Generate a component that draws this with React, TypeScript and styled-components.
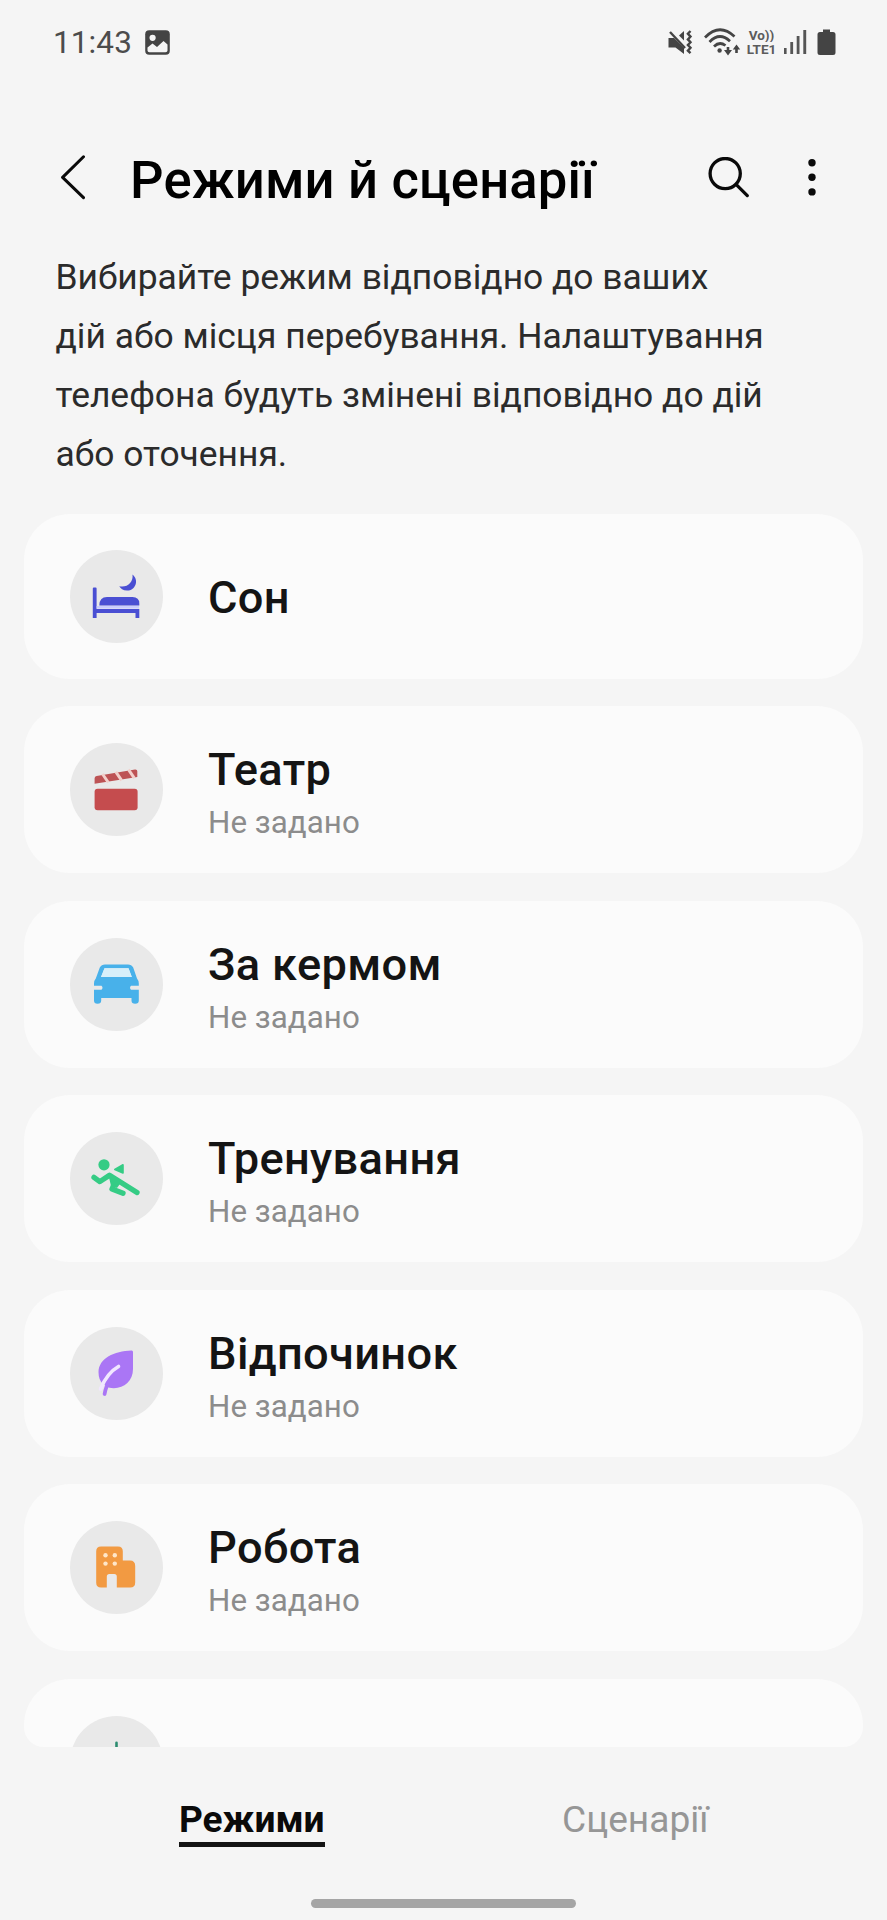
import React from 'react';
import styled, { createGlobalStyle } from 'styled-components';

const GlobalStyle = createGlobalStyle`
  * { box-sizing: border-box; }
  html, body { margin: 0; padding: 0; background: #f5f5f5; }
  body { font-family: Roboto, "Noto Sans", sans-serif; overflow: hidden; }
  h1, h2, p { margin: 0; }
  svg { display: block; flex: none; }
  button { border: 0; padding: 0; background: none; font: inherit; color: inherit; }
`;

const Screen = styled.div`
  width: 887px;
  height: 1920px;
  display: flex;
  flex-direction: column;
  background: #f5f5f5;
  overflow: hidden;
`;

const StatusBar = styled.div`
  flex: none;
  height: 84px;
  padding: 0 51px 0 53px;
  display: flex;
  align-items: center;
  justify-content: space-between;
  color: #4c4c4c;
`;

const StatusGroup = styled.div`
  display: flex;
  align-items: center;
`;

const Clock = styled.span`
  font-size: 31.5px;
  line-height: 40px;
  padding-top: 1px;
  letter-spacing: 0.1px;
  margin-right: 12px;
`;

const VoLte = styled.div`
  width: 33px;
  margin: 0 6px 0 4px;
  font-size: 13.5px;
  font-weight: 700;
  line-height: 14px;
  text-align: center;
  white-space: nowrap;
  color: #5c5c5c;
`;

const VoLteLine = styled.div`
  height: 14px;
  overflow: hidden;
`;

const Header = styled.header`
  flex: none;
  height: 117px;
  margin-top: 37px;
  padding: 0 66px 0 59px;
  display: flex;
  align-items: center;
`;

const IconButton = styled.button<{ $gap?: number }>`
  display: flex;
  margin-left: ${({ $gap = 0 }) => $gap}px;
`;

const Title = styled.h1`
  flex: 1;
  margin-left: 41px;
  font-size: 52.6px;
  font-weight: 500;
  line-height: 62px;
  letter-spacing: 0.15px;
  color: #000;
  white-space: nowrap;
`;

const Description = styled.p`
  flex: none;
  padding: 10px 55.5px 0;
  height: 246px;
  font-size: 35.4px;
  line-height: 59px;
  color: #2b2b2b;
`;

const Line = styled.span`
  display: block;
  white-space: nowrap;
`;

const CardList = styled.main`
  flex: none;
  height: 1263px;
  margin: 0 24px;
  padding-top: 29.5px;
  display: flex;
  flex-direction: column;
  gap: 27.6px;
  overflow: hidden;
  border-radius: 0 0 20px 20px;
`;

const Card = styled.section<{ $single?: boolean }>`
  flex: none;
  height: ${({ $single }) => ($single ? 165 : 167)}px;
  padding: 0 45.5px;
  display: flex;
  align-items: center;
  gap: 45.5px;
  border-radius: 46px;
  background: #fbfbfb;
`;

const IconCircle = styled.div`
  flex: none;
  width: 93px;
  height: 93px;
  border-radius: 50%;
  background: #e9e9e9;
`;

const CardText = styled.div<{ $single?: boolean }>`
  padding-top: ${({ $single }) => ($single ? 4 : 13)}px;
`;

const CardTitle = styled.h2`
  font-size: 45.2px;
  font-weight: 500;
  line-height: 54px;
  letter-spacing: 0.35px;
  color: #141414;
  white-space: nowrap;
`;

const CardStatus = styled.p`
  font-size: 31.3px;
  line-height: 52px;
  letter-spacing: 0.05px;
  color: #8c8c8c;
`;

const TabBar = styled.nav`
  flex: 1;
  display: grid;
  grid-template-columns: 1fr 1fr;
  padding: 50px 60px 0;
`;

const Tab = styled.button<{ $active?: boolean }>`
  justify-self: center;
  align-self: start;
  height: 50px;
  font-size: 37.1px;
  line-height: 44px;
  font-weight: ${({ $active }) => ($active ? 700 : 400)};
  color: ${({ $active }) => ($active ? '#0a0a0a' : '#969696')};
  border-bottom: ${({ $active }) => ($active ? '5px solid #141414' : '5px solid transparent')};
`;

const HomeArea = styled.footer`
  flex: none;
  height: 21px;
  display: flex;
  justify-content: center;
`;

const HomeHandle = styled.div`
  width: 265px;
  height: 9px;
  border-radius: 5px;
  background: #a5a5a5;
`;

const PictureIcon = () => (
  <svg width="27" height="27" viewBox="0 0 27 27">
    <rect x="1.2" y="1.2" width="24.6" height="24.6" rx="4" fill="#444" />
    <circle cx="8.6" cy="8.8" r="3.1" fill="#f5f5f5" />
    <path d="M3.5 18.5 L8.5 14.5 L13 18 L19.5 12 L23.5 15.5 V21.5 Q23.5 23.2 21.5 23.2 H5.5 Q3.5 23.2 3.5 21.5 Z" fill="#f5f5f5" />
  </svg>
);

const MuteIcon = () => (
  <svg width="25" height="27" viewBox="0 0 25 27" fill="#444">
    <path d="M0.5 9 H6 L16 19 V25 L7.5 18.5 H0.5 Z" />
    <path d="M11 6.5 L16 2 V11.5 Z" />
    <path d="M2 3 L17 19" stroke="#444" strokeWidth="2.4" />
    <path d="M22.5 2 l-2.6 2.8 2.6 2.8 -2.6 2.8 2.6 2.8 -2.6 2.8 2.6 2.8 -2.6 2.8 2.6 2.6" fill="none" stroke="#444" strokeWidth="2.4" />
  </svg>
);

const WifiSvg = styled.svg`
  margin-left: 11px;
`;

const WifiIcon = () => (
  <WifiSvg width="37" height="29" viewBox="0 0 37 29" fill="none" stroke="#444" strokeWidth="2.7">
    <path d="M1 9.5 Q15.5 -5.5 30.5 8.5" />
    <path d="M5.5 14 Q15.5 3.5 26 13.2" />
    <path d="M10 18.5 Q15.5 13 21.5 17.5" />
    <circle cx="15.6" cy="22.5" r="2.2" fill="#444" stroke="none" />
    <path d="M24 19 V24 M32.5 25 V20" strokeWidth="2.6" />
    <path d="M20 22 H28 L24 27.4 Z M28.8 21.5 H36.2 L32.5 16.4 Z" fill="#444" stroke="none" />
  </WifiSvg>
);

const SignalIcon = () => (
  <svg width="23" height="26" viewBox="0 0 23 26" fill="#555">
    <rect x="0" y="19" width="2.6" height="6" />
    <rect x="6.3" y="13" width="2.8" height="12" />
    <rect x="12.7" y="7" width="2.8" height="18" />
    <rect x="19.3" y="1" width="2.9" height="24" />
  </svg>
);

const BatterySvg = styled.svg`
  margin-left: 10px;
`;

const BatteryIcon = () => (
  <BatterySvg width="19" height="27" viewBox="0 0 19 27" fill="#444">
    <path d="M6 0.5 H13 V3 H16 Q18.5 3 18.5 5.5 V23.5 Q18.5 26 16 26 H3 Q.5 26 .5 23.5 V5.5 Q.5 3 3 3 H6 Z" />
  </BatterySvg>
);

const BackIcon = () => (
  <svg width="30" height="50" viewBox="0 0 30 50" fill="none" stroke="#0a0a0a" strokeWidth="3" strokeLinecap="round" strokeLinejoin="round">
    <path d="M24.5 1.8 L3.6 22.4 L24.5 42.6" />
  </svg>
);

const SearchIcon = () => (
  <svg width="46" height="46" viewBox="0 0 46 46" fill="none" stroke="#0a0a0a" strokeWidth="3.3" strokeLinecap="round">
    <circle cx="19.2" cy="16.6" r="15.1" />
    <path d="M30.3 27.6 L41.3 38.6" />
  </svg>
);

const MoreIcon = () => (
  <svg width="18" height="46" viewBox="0 0 18 46" fill="#0a0a0a">
    <circle cx="9" cy="5.7" r="3.7" />
    <circle cx="9" cy="20.3" r="3.7" />
    <circle cx="9" cy="34.9" r="3.7" />
  </svg>
);

const ModeSvg = ({ children }: { children: React.ReactNode }) => (
  <svg width="93" height="93" viewBox="0 0 93 93">{children}</svg>
);

const SleepIcon = () => (
  <ModeSvg>
    <g fill="#4a4fd3">
      <path d="M22.8 38.5 Q22.8 37.5 23.8 37.5 H25.6 Q26.6 37.5 26.6 38.5 V59 H69.3 V68 H65.5 V63 H26.6 V68 H22.8 Z" />
      <path d="M29.3 55.6 Q29.3 47 37 47 H62.5 Q69.3 47 69.3 53.5 V55.6 Z" />
      <path d="M62.5 24.5 C70 31 64.5 41 57 40.6 C53 40.5 50.4 38.5 49.3 36.3 C57.5 38 63.5 32 62.5 24.5 Z" />
    </g>
    <path d="M26.6 57.3 H69" stroke="#c9ccff" strokeWidth="2.6" />
  </ModeSvg>
);

const TheaterIcon = () => (
  <ModeSvg>
    <rect x="24.6" y="45.8" width="43" height="21.4" rx="3" fill="#c54c4e" />
    <path d="M24.6 35.3 Q24.6 33.3 26.6 33 L65 26.4 Q67.3 26.2 67.3 28.2 V34 L24.6 40.8 Z" fill="#bd5355" />
    <path d="M32.5 31 L38.3 39.5 M45.8 28.8 L51.6 37.3 M58.5 26.6 L64.3 35.1" stroke="#f2cfcb" strokeWidth="3" />
  </ModeSvg>
);

const CarIcon = () => (
  <ModeSvg>
    <path
      fillRule="evenodd"
      fill="#48b1ea"
      d="M35 26.5 H58 Q61.5 26.5 63.2 29.5 L67 40.5 Q68.8 42.5 68.8 45.5 V47.8 H61 Q59 49.8 61 51.8 H68.8 V62.5 Q68.8 65.8 65.2 65.8 Q61.5 65.8 61.5 62.5 V60 H31.2 V62.5 Q31.2 65.8 27.5 65.8 Q24 65.8 24 62.5 V51.8 H31.5 Q33.5 49.8 31.5 47.8 H24 V45.5 Q24 42.5 25.8 40.5 L29.8 29.5 Q31.5 26.5 35 26.5 Z M34.5 30.3 L31 39 H61.8 L58.5 30.3 Z"
    />
    <path d="M34.5 30.3 L31 39 H61.8 L58.5 30.3 Z" fill="#d6effa" />
  </ModeSvg>
);

const ExerciseIcon = () => (
  <ModeSvg>
    <g fill="none" stroke="#35cc85" strokeLinecap="round" strokeLinejoin="round">
      <path d="M24 45.3 L29.8 49.6 L39.5 43.2 L67 60.5" strokeWidth="5.3" />
      <path d="M45.5 49 L42 57 L53 61.3" strokeWidth="5.3" />
    </g>
    <path d="M38 41 L52 49 L47 56 L41 54 Z" fill="#35cc85" />
    <circle cx="34" cy="32.8" r="5.6" fill="#35cc85" />
    <path d="M44.8 37.4 L53 32.8 V41 Z" fill="#35cc85" stroke="#35cc85" strokeWidth="1.6" strokeLinejoin="round" />
  </ModeSvg>
);

const RelaxIcon = () => (
  <ModeSvg>
    <path d="M61.5 23.5 Q63 23.3 63 25 V42 C63 56 51 63.5 38.5 60.5 L33 57 Q28.5 53 28.5 45 C29 31 44 24.3 61.5 23.5 Z" fill="#aa76f5" />
    <path d="M48.5 39.5 Q37 46 30.5 62" fill="none" stroke="#f1e7ff" strokeWidth="3.6" strokeLinecap="round" />
    <path d="M39.5 54 Q36 59 34.6 67" fill="none" stroke="#aa76f5" strokeWidth="3.8" strokeLinecap="round" />
  </ModeSvg>
);

const WorkIcon = () => (
  <ModeSvg>
    <path
      d="M31 25.5 H48 Q52.8 25.5 52.8 30.3 V39.5 H60 Q65.2 39.5 65.2 45 V61.5 Q65.2 66.5 60.2 66.5 H46.8 V55.5 Q46.8 53 44.3 53 H39.3 Q36.8 53 36.8 55.5 V66.5 H31 Q26.2 66.5 26.2 61.7 V30.3 Q26.2 25.5 31 25.5 Z"
      fill="#f29a42"
    />
    <g fill="#ffe6c8">
      <circle cx="35.5" cy="34.3" r="2.2" />
      <circle cx="44.8" cy="34.3" r="2.2" />
      <circle cx="35.5" cy="42.6" r="2.2" />
      <circle cx="44.8" cy="42.6" r="2.2" />
    </g>
  </ModeSvg>
);

const CustomIcon = () => (
  <ModeSvg>
    <path d="M46.5 26.8 V68 M25 46.5 H68" stroke="#2c8c70" strokeWidth="2.6" strokeLinecap="round" />
  </ModeSvg>
);

const modes = [
  { name: 'Сон', Icon: SleepIcon, single: true },
  { name: 'Театр', Icon: TheaterIcon },
  { name: 'За кермом', Icon: CarIcon },
  { name: 'Тренування', Icon: ExerciseIcon },
  { name: 'Відпочинок', Icon: RelaxIcon },
  { name: 'Робота', Icon: WorkIcon },
];

export default function App() {
  return (
    <>
      <GlobalStyle />
      <Screen>
        <StatusBar>
          <StatusGroup>
            <Clock>11:43</Clock>
            <PictureIcon />
          </StatusGroup>
          <StatusGroup>
            <MuteIcon />
            <WifiIcon />
            <VoLte>
              <VoLteLine>Vo))</VoLteLine>
              <VoLteLine>LTE1</VoLteLine>
            </VoLte>
            <SignalIcon />
            <BatteryIcon />
          </StatusGroup>
        </StatusBar>
        <Header>
          <IconButton aria-label="Назад"><BackIcon /></IconButton>
          <Title>Режими й сценарії</Title>
          <IconButton aria-label="Пошук"><SearchIcon /></IconButton>
          <IconButton aria-label="Більше" $gap={51}><MoreIcon /></IconButton>
        </Header>
        <Description>
          <Line>Вибирайте режим відповідно до ваших</Line>
          <Line>дій або місця перебування. Налаштування</Line>
          <Line>телефона будуть змінені відповідно до дій</Line>
          <Line>або оточення.</Line>
        </Description>
        <CardList>
          {modes.map(({ name, Icon, single }) => (
            <Card key={name} $single={single}>
              <IconCircle><Icon /></IconCircle>
              <CardText $single={single}>
                <CardTitle>{name}</CardTitle>
                {!single && <CardStatus>Не задано</CardStatus>}
              </CardText>
            </Card>
          ))}
          <Card>
            <IconCircle><CustomIcon /></IconCircle>
          </Card>
        </CardList>
        <TabBar>
          <Tab $active>Режими</Tab>
          <Tab>Сценарії</Tab>
        </TabBar>
        <HomeArea><HomeHandle /></HomeArea>
      </Screen>
    </>
  );
}
